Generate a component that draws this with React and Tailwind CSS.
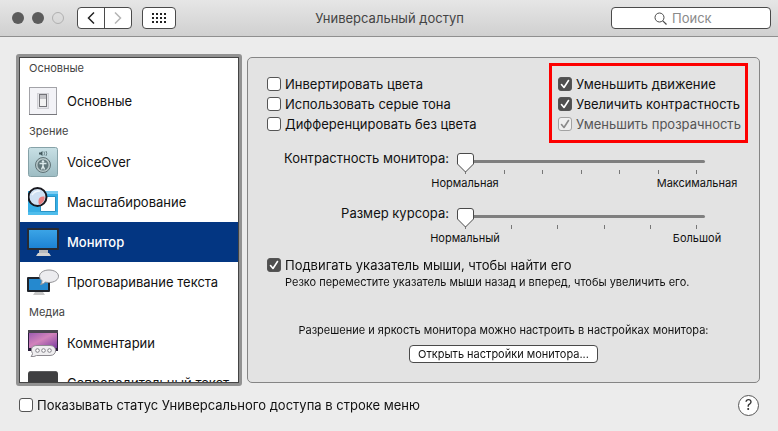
import { useState } from 'react';

const sections = [
  { title: 'Основные', items: [{ name: 'Основные', Icon: SwitchIcon }] },
  {
    title: 'Зрение',
    items: [
      { name: 'VoiceOver', Icon: VoiceOverIcon },
      { name: 'Масштабирование', Icon: ZoomIcon },
      { name: 'Монитор', Icon: MonitorIcon },
      { name: 'Проговаривание текста', Icon: SpeechIcon },
    ],
  },
  {
    title: 'Медиа',
    items: [
      { name: 'Комментарии', Icon: CommentsIcon },
      { name: 'Сопроводительный текст', Icon: CaptionsIcon },
    ],
  },
];

function SwitchIcon() {
  return (
    <svg width="30" height="30" viewBox="0 0 30 30" aria-hidden="true">
      <rect x="1.5" y="1.5" width="27" height="27" fill="#f3f3f7" stroke="#a3a3a8" />
      <path d="M1 28.5h28" stroke="#77777c" />
      <rect x="9.5" y="7.5" width="11" height="15" fill="#e6e6ea" stroke="#d0d0d5" />
      <rect x="11.5" y="8.5" width="7" height="12" fill="#f2f2f2" stroke="#737378" />
      <rect x="12" y="9" width="6" height="4" fill="#c2c2c6" />
    </svg>
  );
}

function VoiceOverIcon() {
  return (
    <svg width="30" height="30" viewBox="0 0 30 30" aria-hidden="true">
      <defs>
        <linearGradient id="voice" x1="0" y1="0" x2="0" y2="1">
          <stop offset="0" stopColor="#c8e0e5" />
          <stop offset="1" stopColor="#9dbcc3" />
        </linearGradient>
      </defs>
      <rect x="0.5" y="0.5" width="29" height="29" rx="2" fill="url(#voice)" stroke="#86a2a8" />
      <path d="M11 5.500h1.500l2-1.500v5l-2-1.500H11z" fill="#41585d" />
      <path d="M16 4.500q1 2 0 4M18 4q1.500 2.500 0 5" fill="none" stroke="#6b8388" />
      <circle cx="15" cy="18" r="7.500" fill="#b5c6c8" stroke="#5f7276" />
      <circle cx="15" cy="18" r="5.500" fill="#62777b" />
      <circle cx="15" cy="14.500" r="1.300" fill="#dbe9eb" />
      <path d="M11.500 16.500h7M15 16.500v3M15 19l-1.500 3.500M15 19l1.500 3.500" stroke="#dbe9eb" strokeWidth="1.500" fill="none" />
    </svg>
  );
}

function ZoomIcon() {
  return (
    <svg width="30" height="30" viewBox="0 0 30 30" aria-hidden="true">
      <path d="M0 4h30v24H0z" fill="#37aee5" />
      <path d="M12 4h18v3H12z" fill="#7ccdf2" />
      <path d="M12.500 9.500h15v15h-15z" fill="#fff" stroke="#2993c4" />
      <path d="M0 25h30v3H0z" fill="#4fbdec" />
      <circle cx="9.500" cy="10" r="9" fill="#cfe1f3" stroke="#18181e" strokeWidth="2" />
      <path d="M10.500 13.500q.5-4.500 6-4q1 5-5 8.500q-1.500-1.500-1-4.500z" fill="#e87f80" />
      <path d="M4 8q3-4.500 8-4" fill="none" stroke="#f2f8fd" strokeWidth="1.500" />
    </svg>
  );
}

function MonitorIcon() {
  return (
    <svg width="32" height="30" viewBox="0 0 32 30" aria-hidden="true">
      <defs>
        <linearGradient id="screen" x1="0" y1="0" x2="0" y2="1">
          <stop offset="0" stopColor="#3ba4e6" />
          <stop offset="1" stopColor="#1d83d3" />
        </linearGradient>
      </defs>
      <path d="M12 23h9v4h-9z" fill="#b9babd" />
      <path d="M11 26h11l2 3H9z" fill="#d4d2d0" />
      <rect x="0" y="1" width="32" height="22" rx="1" fill="#272a33" />
      <rect x="2" y="3" width="28" height="18" fill="url(#screen)" />
    </svg>
  );
}

function SpeechIcon() {
  return (
    <svg width="32" height="30" viewBox="0 0 32 30" aria-hidden="true">
      <path d="M9 24h6v2H9z" fill="#a8a8aa" />
      <path d="M8 25h8l2 3H6z" fill="#c6c6c6" />
      <rect x="0" y="10" width="23" height="15" rx="1" fill="#20242b" />
      <rect x="2" y="12" width="19" height="11" fill="#2589cf" />
      <path d="M22 3c5.500 0 9.500 2.800 9.500 6.200S27.500 15.500 22 15.500q-2 0-3.500-.4q-2 2-5 2.400q1.500-1.500 1.500-3.800Q12.500 12 12.500 9.200C12.500 5.800 16.500 3 22 3z" fill="#ececef" stroke="#929296" />
    </svg>
  );
}

function CommentsIcon() {
  return (
    <svg width="30" height="30" viewBox="0 0 30 30" aria-hidden="true">
      <defs>
        <linearGradient id="movie" x1="0" y1="0" x2="1" y2="1">
          <stop offset="0" stopColor="#9c5cb0" />
          <stop offset="0.450" stopColor="#d283bb" />
          <stop offset="1" stopColor="#7a3da0" />
        </linearGradient>
      </defs>
      <rect x="0" y="2" width="30" height="21" fill="#291d3a" />
      <rect x="1" y="5" width="28" height="15" fill="url(#movie)" />
      <path d="M0 2h30v3H0z" fill="#4b4650" />
      <path d="M9 17.500h13c7.500 0 7.500 10 0 10H8.500q-2.500 1.500-5.500 1q1.500-1.500 1.500-3C2 21 4 17.500 9 17.500z" fill="#efeef0" stroke="#8d8a90" />
      <g fill="#fff" stroke="#828087">
        <circle cx="9.500" cy="22.500" r="1.800" />
        <circle cx="15.500" cy="22.500" r="1.800" />
        <circle cx="21.500" cy="22.500" r="1.800" />
      </g>
    </svg>
  );
}

function CaptionsIcon() {
  return (
    <svg width="30" height="30" viewBox="0 0 30 30" aria-hidden="true">
      <rect x="0" y="3" width="30" height="27" rx="3" fill="#3f3f41" />
      <path d="M2 3.500h26" stroke="#5c5c5e" />
      <path d="M6 23h18" stroke="#e2e2e2" strokeWidth="2" />
    </svg>
  );
}

function Checkbox({ label, defaultChecked = false, disabled = false }) {
  return (
    <label className="flex h-5 items-center gap-1 whitespace-nowrap">
      <span className="grid shrink-0">
        <input
          type="checkbox"
          defaultChecked={defaultChecked}
          disabled={disabled}
          className="peer col-start-1 row-start-1 size-3.5 appearance-none rounded-[3px] border border-[#555] bg-white checked:bg-[#4f4f4f] disabled:border-[#a2a2a2] disabled:bg-[#efefef]"
        />
        <svg
          viewBox="0 0 14 14"
          aria-hidden="true"
          className="pointer-events-none invisible col-start-1 row-start-1 size-3.5 text-white peer-checked:visible peer-disabled:text-[#8a8a8a]"
        >
          <path d="M3.500 7.500L6 10.500L10.500 3.500" fill="none" stroke="currentColor" strokeWidth="1.600" strokeLinecap="round" strokeLinejoin="round" />
        </svg>
      </span>
      <span className={disabled ? 'text-[#555]' : ''}>{label}</span>
    </label>
  );
}

function Slider({ id, label, steps, min, max }) {
  const [value, setValue] = useState(0);

  return (
    <div className="flex">
      <label htmlFor={id} className="w-[201px] shrink-0 text-right leading-5 whitespace-nowrap">{label}</label>
      <div className="mt-1 mr-[54px] ml-2 flex-1">
        <div className="relative h-6 px-2">
          <div className="absolute inset-x-0 top-2 h-[3px] rounded-full bg-[#7f7f7f]" />
          <div className="flex justify-between pt-[18px]">
            {Array.from({ length: steps + 1 }, (_, i) => (
              <span key={i} className="h-1 w-px bg-[#777]" />
            ))}
          </div>
          <div className="absolute inset-x-2 top-px">
            <svg
              width="18"
              height="20"
              viewBox="0 0 18 20"
              aria-hidden="true"
              className="relative -translate-x-2"
              style={{ left: `${(value / steps) * 100}%` }}
            >
              <path d="M3 .5h11q2.500 0 2.500 2.500v8L8.500 19L.5 11V3Q.5.5 3 .5z" fill="#fff" stroke="#4a4a4a" />
            </svg>
          </div>
          <input
            id={id}
            type="range"
            min="0"
            max={steps}
            value={value}
            onChange={(e) => setValue(Number(e.target.value))}
            className="absolute inset-0 m-0 h-full w-full opacity-0"
          />
        </div>
        <div className="-mx-8 flex justify-between text-[11px] leading-[14px] whitespace-nowrap">
          <span className="flex w-20 justify-center">{min}</span>
          <span className="flex w-20 justify-center">{max}</span>
        </div>
      </div>
    </div>
  );
}

function Toolbar() {
  return (
    <header className="grid h-[37px] shrink-0 grid-cols-[1fr_auto_1fr] items-center border-b border-[#8f8f8f] bg-linear-to-b from-[#e6e6e6] to-[#d0d0d0] pr-[7px] pl-3">
      <div className="flex items-center">
        <div className="flex gap-2">
          <button aria-label="Закрыть" className="size-3 rounded-full bg-[#5c5c5c]" />
          <button aria-label="Свернуть" className="size-3 rounded-full bg-[#5c5c5c]" />
          <button aria-label="Развернуть" className="size-3 rounded-full border border-[#b0b0b0]" />
        </div>
        <div className="ml-[13px] flex h-[22px] w-[55px] rounded border border-[#4a4a4a] bg-white">
          <button aria-label="Назад" className="flex flex-1 items-center justify-center border-r border-[#4a4a4a]">
            <svg width="8" height="12" viewBox="0 0 8 12" aria-hidden="true">
              <path d="M7 .5L1.500 6L7 11.500" fill="none" stroke="#222" strokeWidth="1.500" />
            </svg>
          </button>
          <button aria-label="Вперед" className="flex flex-1 items-center justify-center">
            <svg width="8" height="12" viewBox="0 0 8 12" aria-hidden="true">
              <path d="M1 .5L6.500 6L1 11.500" fill="none" stroke="#b5b5b5" strokeWidth="1.500" />
            </svg>
          </button>
        </div>
        <button aria-label="Показать все" className="ml-2.5 flex h-[22px] w-[34px] items-center justify-center rounded border border-[#4a4a4a] bg-white">
          <svg width="14" height="10" viewBox="0 0 14 10" fill="#222" aria-hidden="true">
            {[0, 4, 8].map((y) => [0, 4, 8, 12].map((x) => <rect key={`${x}-${y}`} x={x} y={y} width="2" height="2" />))}
          </svg>
        </button>
      </div>
      <h1 className="pr-1 text-[#444]">Универсальный доступ</h1>
      <label className="ml-auto flex h-[22px] w-40 items-center rounded border border-[#4a4a4a] bg-white pl-[42px]">
        <svg width="13" height="13" viewBox="0 0 13 13" aria-hidden="true" className="shrink-0">
          <circle cx="5.500" cy="5.500" r="4.500" fill="none" stroke="#4a4a4a" />
          <path d="M8.800 8.800l3.700 3.700" stroke="#4a4a4a" strokeWidth="1.200" />
        </svg>
        <input type="search" aria-label="Поиск" placeholder="Поиск" className="ml-1 w-full min-w-0 bg-transparent pl-px outline-none placeholder:text-[#8a8a8a]" />
      </label>
    </header>
  );
}

function Sidebar() {
  const [active, setActive] = useState('Монитор');

  return (
    <nav className="w-[226px] shrink-0 rounded-[3px] border-[3px] border-[#929292] bg-[#929292]">
      <div className="h-full overflow-y-auto border border-[#444] bg-white [scrollbar-width:none]">
        {sections.map((section) => (
          <section key={section.title}>
            <h2 className={`pl-[9px] text-[11px] leading-[21px] text-[#444] ${section === sections[0] ? 'pb-0.5' : ''}`}>
              {section.title}
            </h2>
            {section.items.map(({ name, Icon }) => (
              <button
                key={name}
                onClick={() => setActive(name)}
                className={`flex h-10 w-full items-center text-left whitespace-nowrap ${
                  active === name ? 'bg-[#033682] font-medium text-white' : ''
                }`}
              >
                <span className="ml-[7px] flex w-8 shrink-0 justify-center">
                  <Icon />
                </span>
                <span className="ml-2">{name}</span>
              </button>
            ))}
          </section>
        ))}
      </div>
    </nav>
  );
}

export default function App() {
  return (
    <div className="flex h-screen flex-col bg-[#ececec] font-[Inter,'Liberation_Sans',sans-serif] text-[13px] leading-5 text-[#111]">
      <Toolbar />

      <div className="flex min-h-0 flex-1 px-4 pt-[17px]">
        <Sidebar />

        <main className="mt-[3px] mr-[2px] mb-[3px] ml-[5px] flex-1 rounded-[5px] border border-[#858585] bg-[#e3e3e3]">
          <div className="flex items-start justify-between">
            <div className="pt-4 pl-[19px]">
              <Checkbox label="Инвертировать цвета" />
              <Checkbox label="Использовать серые тона" />
              <Checkbox label="Дифференцировать без цвета" />
            </div>
            <div className="mt-[5px] mr-[11px] w-[199px] border-[3px] border-[#fd0000] pt-2 pb-1.5 pl-1.5">
              <Checkbox label="Уменьшить движение" defaultChecked />
              <Checkbox label="Увеличить контрастность" defaultChecked />
              <Checkbox label="Уменьшить прозрачность" defaultChecked disabled />
            </div>
          </div>

          <div className="mt-[5px] flex flex-col gap-[13px]">
            <Slider id="contrast" label="Контрастность монитора:" steps={6} min="Нормальная" max="Максимальная" />
            <Slider id="cursor" label="Размер курсора:" steps={5} min="Нормальный" max="Большой" />
          </div>

          <div className="mt-2.5 pl-[19px]">
            <Checkbox label="Подвигать указатель мыши, чтобы найти его" defaultChecked />
            <p className="pl-[18px] text-[11px] leading-[14px]">
              Резко переместите указатель мыши назад и вперед, чтобы увеличить его.
            </p>
          </div>

          <div className="mt-[34px] flex flex-col items-center text-[11px] leading-[14px]">
            <p>Разрешение и яркость монитора можно настроить в настройках монитора:</p>
            <button className="mt-2 h-[18px] w-[189px] rounded border border-[#4a4a4a] bg-white leading-4 whitespace-nowrap">
              Открыть настройки монитора...
            </button>
          </div>
        </main>
      </div>

      <footer className="flex h-[45px] shrink-0 items-center justify-between pr-[19px] pb-[7px] pl-[19px]">
        <Checkbox label="Показывать статус Универсального доступа в строке меню" />
        <button aria-label="Справка" className="size-[21px] rounded-full border border-[#555] bg-white text-[15px] leading-[18px] text-[#333]">
          ?
        </button>
      </footer>
    </div>
  );
}
